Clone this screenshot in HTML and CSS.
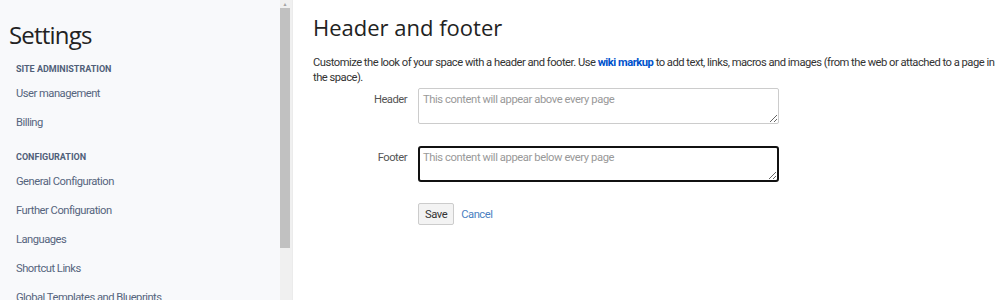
FILE: index.html
```html
<!DOCTYPE html>
<html lang="en">
<head>
    <meta charset="UTF-8">
    <title>Header and footer - Settings</title>
    <link rel="stylesheet" href="styles.css">
</head>
<body>
    <div class="page">
        <aside class="sidebar">
            <div class="sidebar-content">
                <h1 class="sidebar-title">Settings</h1>
                <div class="nav-heading">Site administration</div>
                <a class="nav-item" href="#">User management</a>
                <a class="nav-item" href="#">Billing</a>
                <div class="nav-heading nav-heading-gap">Configuration</div>
                <a class="nav-item" href="#">General Configuration</a>
                <a class="nav-item" href="#">Further Configuration</a>
                <a class="nav-item" href="#">Languages</a>
                <a class="nav-item" href="#">Shortcut Links</a>
                <a class="nav-item" href="#">Global Templates and Blueprints</a>
            </div>
            <div class="scrollbar">
                <div class="scroll-arrow">&#9650;</div>
                <div class="scroll-thumb"></div>
            </div>
        </aside>
        <main class="content">
            <h2 class="page-title">Header and footer</h2>
            <p class="intro">Customize the look of your space with a header and footer. Use <a href="#" class="strong-link">wiki markup</a> to add text, links, macros and images (from the web or attached to a page in the space).</p>
            <form class="form">
                <div class="field">
                    <label for="header">Header</label>
                    <textarea id="header" placeholder="This content will appear above every page"></textarea>
                </div>
                <div class="field">
                    <label for="footer">Footer</label>
                    <textarea id="footer" class="focused" placeholder="This content will appear below every page"></textarea>
                </div>
                <div class="buttons">
                    <button type="button" class="btn">Save</button>
                    <a href="#" class="cancel">Cancel</a>
                </div>
            </form>
        </main>
    </div>
</body>
</html>
```

FILE: styles.css
```css
body {
    margin: 0;
    font-family: Roboto, "Noto Sans", sans-serif;
    letter-spacing: -0.5px;
    color: #333;
    background: #fff;
    overflow: hidden;
}
.page {
    display: flex;
    height: 300px;
}
.sidebar {
    display: flex;
    width: 292px;
    flex-shrink: 0;
    background: #f8f9fb;
    border-right: 1px solid #ebebeb;
}
.sidebar-content {
    flex: 1;
    padding: 0 0 0 9px;
}
.sidebar-title {
    margin: 20px 0 0 0;
    font-family: "Open Sans", sans-serif;
    font-size: 24px;
    font-weight: 400;
    letter-spacing: -0.8px;
    line-height: 30px;
    color: #222;
}
.nav-heading {
    margin: 12px 0 0 7px;
    font-size: 9px;
    font-weight: 700;
    letter-spacing: 0;
    text-transform: uppercase;
    color: #505f79;
    line-height: 14px;
}
.nav-heading-gap {
    margin-top: 13px;
}
.nav-item {
    display: block;
    margin-left: 7px;
    font-size: 11.2px;
    line-height: 29px;
    color: #56657e;
    text-decoration: none;
    white-space: nowrap;
}
.nav-heading + .nav-item {
    margin-top: 3px;
}
/* the sidebar has its own scrollbar */
.scrollbar {
    display: flex;
    flex-direction: column;
    width: 12px;
    background: #f0f0f0;
}
.scroll-arrow {
    height: 8px;
    width: 10px;
    font-size: 5px;
    letter-spacing: 0;
    line-height: 8px;
    text-align: center;
    color: #a3a3a3;
}
.scroll-thumb {
    width: 10px;
    height: 240px;
    background: #c1c1c1;
}
.content {
    flex: 1;
    padding: 0 0 0 20px;
}
.page-title {
    margin: 12px 0 0 0;
    font-family: "Open Sans", sans-serif;
    font-size: 22px;
    font-weight: 400;
    letter-spacing: 0;
    line-height: 30px;
    color: #222;
}
.intro {
    width: 688px;
    margin: 13px 0 0 0;
    font-size: 11.2px;
    line-height: 15px;
    color: #333;
}
.strong-link {
    color: #0052cc;
    font-weight: 700;
    text-decoration: none;
}
.form {
    margin: 3px 0 0 0;
}
.field {
    display: flex;
    align-items: flex-start;
    gap: 11px;
    margin-bottom: 22px;
}
.field label {
    width: 94px;
    text-align: right;
    font-size: 11.2px;
    line-height: 16px;
    padding-top: 4px;
    color: #555;
}
.field textarea {
    box-sizing: border-box;
    width: 361px;
    height: 36px;
    margin: 0;
    padding: 3px 4px;
    border: 1px solid #ccc;
    border-radius: 2px;
    font-family: inherit;
    font-size: 11.2px;
    letter-spacing: -0.4px;
    line-height: 15px;
    color: #333;
}
.field textarea::placeholder {
    color: #999;
}
.field textarea.focused {
    border: 2px solid #111;
    border-radius: 3px;
    padding: 2px 3px;
}
.buttons {
    display: flex;
    align-items: center;
    gap: 7px;
    margin: -1px 0 0 105px;
}
.btn {
    height: 22px;
    padding: 0 6px;
    border: 1px solid #ccc;
    border-radius: 2px;
    background: #f3f3f3;
    font-family: inherit;
    font-size: 11.2px;
    letter-spacing: -0.4px;
    color: #333;
}
.cancel {
    font-size: 11.2px;
    color: #4a7fc1;
    text-decoration: none;
}
```
